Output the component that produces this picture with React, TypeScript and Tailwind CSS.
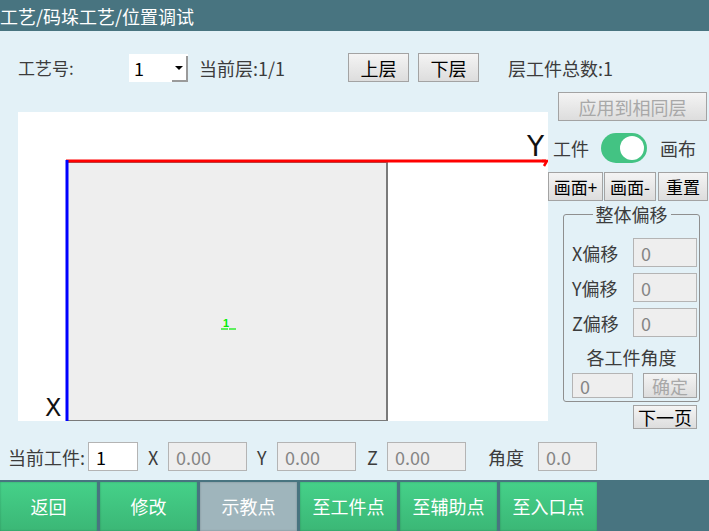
import React from 'react';

const font = { fontFamily: '"Noto Sans CJK SC", "Liberation Sans", sans-serif' };

const GrayBtn: React.FC<{ label: string; className?: string; disabled?: boolean }> = ({ label, className = '', disabled }) => (
  <div
    className={`flex items-center justify-center border border-[#a3a3a3] bg-gradient-to-b from-[#f4f4f4] to-[#dddddd] text-[17px] leading-none ${
      disabled ? 'text-[#a8a8a8]' : 'text-black'
    } ${className}`}
  >
    {label}
  </div>
);

const Field: React.FC<{ value: string; className?: string; white?: boolean }> = ({ value, className = '', white }) => (
  <div
    className={`flex items-center pl-[7px] border text-[18px] leading-none ${
      white ? 'bg-white border-[#b4b4b4] text-black' : 'bg-[#eeeeee] border-[#b4b4b4] text-[#858585]'
    } ${className}`}
  >
    {value}
  </div>
);

const Canvas: React.FC = () => (
  <div className="mt-[20px] ml-[18px] w-[530px] h-[309px] bg-white">
    <svg width="530" height="309" viewBox="0 0 530 309">
      {/* workpiece area */}
      <rect x="49" y="50" width="320" height="259" fill="#eeeeee" stroke="#7a7a7a" strokeWidth="2" />
      {/* Y axis (red) */}
      <line x1="48" y1="49" x2="528" y2="49" stroke="#ff0000" strokeWidth="3" />
      <path d="M524 49 L529 49 L526 54" fill="none" stroke="#ff0000" strokeWidth="2.5" />
      {/* X axis (blue) */}
      <line x1="49" y1="48" x2="49" y2="309" stroke="#0000ff" strokeWidth="3" />
      <text x="509" y="44" fontSize="28" fontFamily="DejaVu Sans, sans-serif" fill="#111">Y</text>
      <text x="27" y="304" fontSize="24" fontFamily="DejaVu Sans, sans-serif" fill="#111">X</text>
      {/* workpiece label */}
      <text x="205" y="215" fontSize="11" fontWeight="bold" fontFamily="Liberation Sans, sans-serif" fill="#00ee00">1</text>
      <line x1="203" y1="217" x2="210" y2="217" stroke="#00ee00" strokeWidth="1.2" />
      <line x1="211" y1="217" x2="218" y2="217" stroke="#00ee00" strokeWidth="1.2" />
    </svg>
  </div>
);

const RightPanel: React.FC = () => (
  <div className="w-[161px] flex flex-col">
    <GrayBtn label="应用到相同层" disabled className="ml-[10px] w-[149px] h-[29px] text-[18px]" />
    <div className="mt-[12px] h-[30px] flex items-center text-[18px] text-[#3c3c3c]">
      <span className="ml-[5px] w-[48px]">工件</span>
      <div className="w-[46px] h-[30px] rounded-full bg-[#43c383] flex items-center justify-end pr-[3px]">
        <div className="w-[24px] h-[24px] rounded-full bg-white" />
      </div>
      <span className="ml-[13px]">画布</span>
    </div>
    <div className="mt-[9px] flex h-[29px]">
      <GrayBtn label="画面+" className="w-[55px] h-[29px] text-[17px]" />
      <GrayBtn label="画面-" className="ml-[1px] w-[52px] h-[29px] text-[17px]" />
      <GrayBtn label="重置" className="ml-[2px] w-[50px] h-[29px] text-[17px]" />
    </div>
    <div className="relative mt-[13px] ml-[15px] w-[137px] h-[188px] border border-[#8f8f8f] rounded-[3px] text-[18px] text-[#3c3c3c] leading-none">
      <div className="absolute -top-[11px] left-0 right-0 flex justify-center">
        <span className="bg-[#e3f1f7] px-[3px] leading-[20px]">整体偏移</span>
      </div>
      <div className="flex flex-col pl-[8px] pt-[23px]">
        {['X', 'Y', 'Z'].map(a => (
          <div key={a} className="flex items-center h-[29px] mb-[6px]">
            <span className="w-[61px]">{a}偏移</span>
            <Field value="0" className="w-[64px] h-[29px]" />
          </div>
        ))}
        <div className="h-[27px] flex items-center justify-center pr-[8px] text-[18px]">各工件角度</div>
        <div className="flex items-center mt-[3px]">
          <Field value="0" className="w-[61px] h-[25px]" />
          <GrayBtn label="确定" disabled className="ml-[10px] w-[54px] h-[25px] text-[18px]" />
        </div>
      </div>
    </div>
    <GrayBtn label="下一页" className="mt-[3px] ml-[85px] w-[64px] h-[24px] text-[18px]" />
  </div>
);

const NavBtn: React.FC<{ label: string; active?: boolean }> = ({ label, active }) => (
  <div
    className={`w-[97px] h-[49px] flex items-center justify-center text-[18px] text-white shadow-[inset_0_0_2px_rgba(0,0,0,0.25)] ${
      active ? 'bg-[#9fb5bc]' : 'bg-gradient-to-b from-[#45d189] to-[#3bb776]'
    }`}
  >
    {label}
  </div>
);

export default function App() {
  return (
    <div className="w-[709px] h-[531px] flex flex-col bg-[#e3f1f7] overflow-hidden" style={font}>
      {/* title bar */}
      <div className="h-[31px] bg-[#487480] flex items-center text-white text-[18px] leading-none">
        工艺/码垛工艺/位置调试
      </div>

      {/* top row */}
      <div className="h-[61px] pt-[22px] flex items-start text-[17px] text-[#3c3c3c] leading-none">
        <div className="h-[29px] flex items-center">
          <span className="ml-[18px] w-[111px]">工艺号:</span>
          <div className="w-[59px] h-[28px] bg-white flex items-center relative">
            <span className="ml-[5px] text-black text-[18px]">1</span>
            <div className="absolute right-0 top-[2px] w-[16px] h-[26px] border-r-2 border-b-2 border-[#9a9a9a] flex items-center justify-center">
              <div className="w-0 h-0 border-l-[4px] border-r-[4px] border-t-[4px] border-l-transparent border-r-transparent border-t-black" />
            </div>
          </div>
          <span className="ml-[11px] w-[149px] text-[18px]">当前层:1/1</span>
          <GrayBtn label="上层" className="w-[61px] h-[29px] text-[18px]" />
          <GrayBtn label="下层" className="ml-[9px] w-[61px] h-[29px] text-[18px]" />
          <span className="ml-[29px] text-[18px]">层工件总数:1</span>
        </div>
      </div>

      {/* main area */}
      <div className="h-[345px] flex">
        <div className="w-[548px]">
          <Canvas />
        </div>
        <RightPanel />
      </div>

      {/* current workpiece row */}
      <div className="h-[43px] pt-[5px] flex items-start text-[18px] text-[#3c3c3c] leading-none">
        <div className="h-[29px] flex items-center">
          <span className="ml-[8px] w-[80px]">当前工件:</span>
          <Field value="1" white className="w-[50px] h-[29px]" />
          <span className="ml-[10px] w-[20px]">X</span>
          <Field value="0.00" className="w-[79px] h-[29px]" />
          <span className="ml-[10px] w-[20px]">Y</span>
          <Field value="0.00" className="w-[79px] h-[29px]" />
          <span className="ml-[11px] w-[20px]">Z</span>
          <Field value="0.00" className="w-[79px] h-[29px]" />
          <span className="ml-[22px] w-[50px]">角度</span>
          <Field value="0.0" className="w-[59px] h-[29px]" />
        </div>
      </div>

      {/* bottom nav */}
      <div className="h-[51px] bg-[#487480] flex items-start pt-[2px] gap-[3px]">
        <NavBtn label="返回" />
        <NavBtn label="修改" />
        <NavBtn label="示教点" active />
        <NavBtn label="至工件点" />
        <NavBtn label="至辅助点" />
        <NavBtn label="至入口点" />
      </div>
    </div>
  );
}
